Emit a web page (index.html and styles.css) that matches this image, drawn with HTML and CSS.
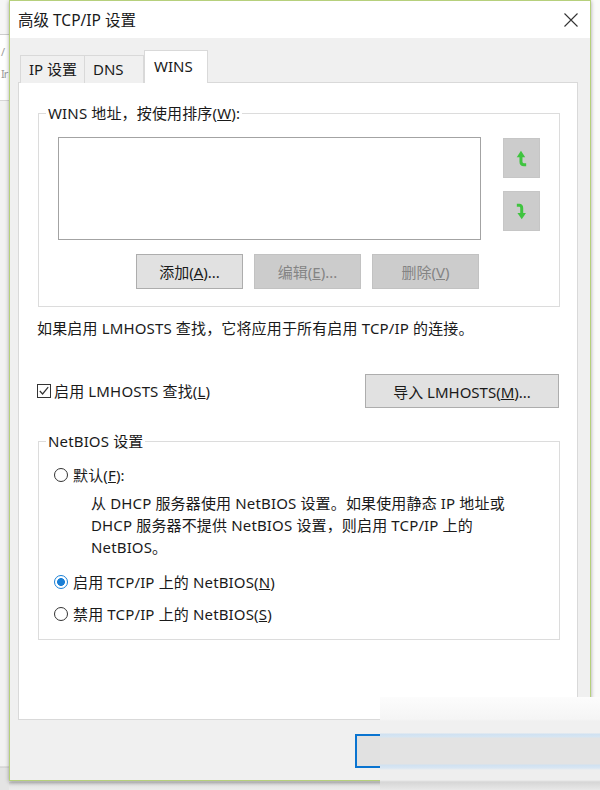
FILE: index.html
```html
<!DOCTYPE html>
<html lang="zh-CN">
<head>
    <meta charset="UTF-8">
    <title>高级 TCP/IP 设置</title>
    <link rel="stylesheet" href="styles.css">
</head>
<body>
    <div class="desktop">
        <div class="behind">
            <div class="behind-top"></div>
            <div class="behind-body">
                <span class="peek">/</span>
                <span class="peek">Ir</span>
            </div>
            <div class="behind-rest"></div>
        </div>

        <div class="dialog">
            <div class="titlebar">
                <span class="title">高级 TCP/IP 设置</span>
                <svg class="close" width="14" height="14" viewBox="0 0 14 14">
                    <path d="M0.5 0.5 L13.5 13.5 M13.5 0.5 L0.5 13.5" stroke="#333" stroke-width="1.1" fill="none"/>
                </svg>
            </div>

            <div class="content">
                <div class="tabs">
                    <div class="tab tab-ip">IP 设置</div>
                    <div class="tab tab-dns">DNS</div>
                    <div class="tab tab-wins active">WINS</div>
                </div>

                <div class="panel">
                    <fieldset class="group">
                        <legend>WINS 地址，按使用排序(<u>W</u>):</legend>
                        <div class="wins-body">
                            <div class="list-col">
                                <div class="listbox"></div>
                                <div class="actions">
                                    <button class="btn">添加(<u>A</u>)...</button>
                                    <button class="btn" disabled>编辑(<u>E</u>)...</button>
                                    <button class="btn" disabled>删除(<u>V</u>)</button>
                                </div>
                            </div>
                            <div class="order">
                                <button class="arrow">
                                    <svg width="11" height="17" viewBox="0 0 10 16">
                                        <path d="M0.5 6.8 L4.5 0.8 L8.5 6.8 Z" fill="#3fc43f"/>
                                        <path d="M4.5 5.5 V11 Q4.5 13.8 7.2 13.8 H9.4" stroke="#3fc43f" stroke-width="2.8" fill="none"/>
                                    </svg>
                                </button>
                                <button class="arrow">
                                    <svg width="11" height="17" viewBox="0 0 10 16">
                                        <path d="M0.6 2.2 H3 Q5.2 2.2 5.2 4.6 V10.5" stroke="#3fc43f" stroke-width="2.8" fill="none"/>
                                        <path d="M1.2 9.3 L5.2 15.2 L9.2 9.3 Z" fill="#3fc43f"/>
                                    </svg>
                                </button>
                            </div>
                        </div>
                    </fieldset>

                    <p class="note">如果启用 LMHOSTS 查找，它将应用于所有启用 TCP/IP 的连接。</p>

                    <div class="lm-row">
                        <label class="check">
                            <svg width="14" height="14" viewBox="0 0 14 14">
                                <rect x="0.5" y="0.5" width="13" height="13" fill="#fff" stroke="#333"/>
                                <path d="M2.8 7 L5.6 10 L11.2 3.2" stroke="#333" stroke-width="1.2" fill="none"/>
                            </svg>
                            <span>启用 LMHOSTS 查找(<u>L</u>)</span>
                        </label>
                        <button class="btn btn-import">导入 LMHOSTS(<u>M</u>)...</button>
                    </div>

                    <fieldset class="group netbios">
                        <legend>NetBIOS 设置</legend>
                        <div class="radio-row">
                            <span class="radio"></span>
                            <span>默认(<u>F</u>):</span>
                        </div>
                        <p class="desc">从 DHCP 服务器使用 NetBIOS 设置。如果使用静态 IP 地址或<br>DHCP 服务器不提供 NetBIOS 设置，则启用 TCP/IP 上的<br>NetBIOS。</p>
                        <div class="radio-row row-on">
                            <span class="radio on"></span>
                            <span>启用 TCP/IP 上的 NetBIOS(<u>N</u>)</span>
                        </div>
                        <div class="radio-row row-off">
                            <span class="radio"></span>
                            <span>禁用 TCP/IP 上的 NetBIOS(<u>S</u>)</span>
                        </div>
                    </fieldset>
                </div>

                <div class="footer">
                    <button class="btn btn-ok"></button>
                    <button class="btn btn-cancel"></button>
                </div>
            </div>
        </div>

        <div class="right-strip"></div>
        <div class="smudge"></div>
    </div>
</body>
</html>
```

FILE: styles.css
```css
* {
    box-sizing: border-box;
}
body {
    margin: 0;
    font-family: "Noto Sans", "Noto Sans CJK SC", sans-serif;
    font-size: 15px;
    color: #1a1a1a;
    background-color: #ffffff;
}
.desktop {
    position: relative;
    width: 600px;
    height: 790px;
    display: flex;
    overflow: hidden;
    background: linear-gradient(#ffffff 781px, #cfcfcf 782px, #e6e6e6 786px, #ececec);
}
.behind {
    width: 9px;
    flex: none;
    display: flex;
    flex-direction: column;
}
.behind-top {
    height: 35px;
    background-color: #f6f6f6;
    border-bottom: 1px solid #cdcdcd;
}
.behind-body {
    height: 66px;
    background-color: #ffffff;
    border-bottom: 1px solid #d6d6d6;
    display: flex;
    flex-direction: column;
    padding: 6px 0 0 1px;
    color: #9a9a9a;
    font-size: 11px;
    line-height: 22px;
    letter-spacing: -1px;
}
.behind-rest {
    flex: 1;
    background: linear-gradient(#f2f2f2 665px, #c9c9c9 666px, #e4e4e4 667px);
}
.right-strip {
    width: 9px;
    flex: none;
    background-color: #fafafa;
    height: 781px;
}
.dialog {
    width: 582px;
    height: 781px;
    flex: none;
    display: flex;
    flex-direction: column;
    border: 1px solid #b6d07c;
    background-color: #f0f0f0;
    box-shadow: 0 1px 4px rgba(0, 0, 0, 0.35);
    position: relative;
    z-index: 1;
}
.titlebar {
    height: 37px;
    flex: none;
    display: flex;
    align-items: center;
    justify-content: space-between;
    padding: 0 12px 0 8px;
    background-color: #ffffff;
}
.title {
    line-height: 20px;
    font-size: 15.5px;
}
.content {
    flex: 1;
    display: flex;
    flex-direction: column;
    padding: 12px 12px 0 8px;
}
.tabs {
    display: flex;
    align-items: flex-end;
    height: 33px;
    margin-bottom: -1px;
    position: relative;
    z-index: 1;
}
.tab {
    height: 28px;
    padding-left: 8px;
    line-height: 26px;
    border: 1px solid #d9d9d9;
    border-bottom: none;
    background-color: #f0f0f0;
}
.tab-ip {
    width: 65px;
    margin-left: 2px;
}
.tab-dns {
    width: 59px;
    border-left: none;
}
.tab-wins {
    width: 64px;
}
.tab.active {
    height: 33px;
    line-height: 30px;
    padding-left: 9px;
    background-color: #ffffff;
}
.panel {
    height: 638px;
    flex: none;
    background-color: #ffffff;
    border: 1px solid #d9d9d9;
    padding: 20px 17px 0 19px;
    letter-spacing: 0.15px;
}
.group {
    margin: 0;
    border: 1px solid #dcdcdc;
    padding: 14px 17px 17px 19px;
}
.group legend {
    padding: 0 2px;
    margin-left: -12px;
    line-height: 20px;
}
.netbios legend {
    margin-left: -8px;
}
.wins-body {
    display: flex;
    gap: 22px;
}
.listbox {
    width: 423px;
    height: 103px;
    border: 1px solid #a3a3a3;
    background-color: #ffffff;
}
.actions {
    display: flex;
    justify-content: flex-end;
    gap: 11px;
    margin-top: 14px;
    padding-right: 2px;
}
.btn {
    font: inherit;
    color: #1a1a1a;
    width: 107px;
    height: 35px;
    padding: 0;
    background-color: #e1e1e1;
    border: 1px solid #adadad;
}
.btn:disabled {
    background-color: #cccccc;
    border-color: #c2c2c2;
    color: #848484;
}
.order {
    display: flex;
    flex-direction: column;
    gap: 13px;
    padding-top: 1px;
}
.arrow {
    width: 37px;
    height: 40px;
    padding: 0;
    display: flex;
    align-items: center;
    justify-content: center;
    background-color: #cccccc;
    border: 1px solid #c6c6c6;
}
.note {
    margin: 11px 0 0 -1px;
    line-height: 20px;
}
.lm-row {
    display: flex;
    justify-content: space-between;
    align-items: center;
    margin-top: 36px;
}
.check {
    display: flex;
    align-items: center;
    gap: 3px;
    line-height: 20px;
    margin-left: -1px;
}
.btn-import {
    width: 194px;
    height: 34px;
    margin-right: 1px;
}
.netbios {
    margin-top: 23px;
    padding: 13px 15px 14px 15px;
}
.radio-row {
    display: flex;
    align-items: center;
    gap: 5px;
    line-height: 22px;
}
.radio {
    width: 14px;
    height: 14px;
    flex: none;
    border-radius: 50%;
    border: 1px solid #333333;
    background-color: #ffffff;
}
.radio.on {
    border-color: #1a7fd6;
    background: radial-gradient(circle, #1a7fd6 0 3.6px, #ffffff 4.2px);
}
.desc {
    margin: 6px 0 0 37px;
    line-height: 22px;
}
.row-on {
    margin-top: 13px;
}
.row-off {
    margin-top: 10px;
}
.footer {
    flex: 1;
    display: flex;
    justify-content: flex-end;
    align-items: flex-start;
    gap: 11px;
    padding-top: 14px;
}
.btn-ok {
    width: 106px;
    height: 34px;
    border: 2px solid #0a74d0;
}
.btn-cancel {
    width: 106px;
    height: 34px;
}
.smudge {
    position: absolute;
    left: 380px;
    top: 697px;
    width: 220px;
    height: 93px;
    z-index: 2;
    background: linear-gradient(#fcfcfc 0, #f5f5f5 22px, #f0f0f0 24px, #f0f0f0 36px,
        #cfe1f1 37px, #d6e5f2 40px, #e3e3e3 41px, #e3e3e3 67px,
        #d0e1f1 68px, #d8e6f3 71px, #eeeeee 73px, #eeeeee 83px,
        #d6d6d6 85px, #e8e8e8 93px);
}
```
